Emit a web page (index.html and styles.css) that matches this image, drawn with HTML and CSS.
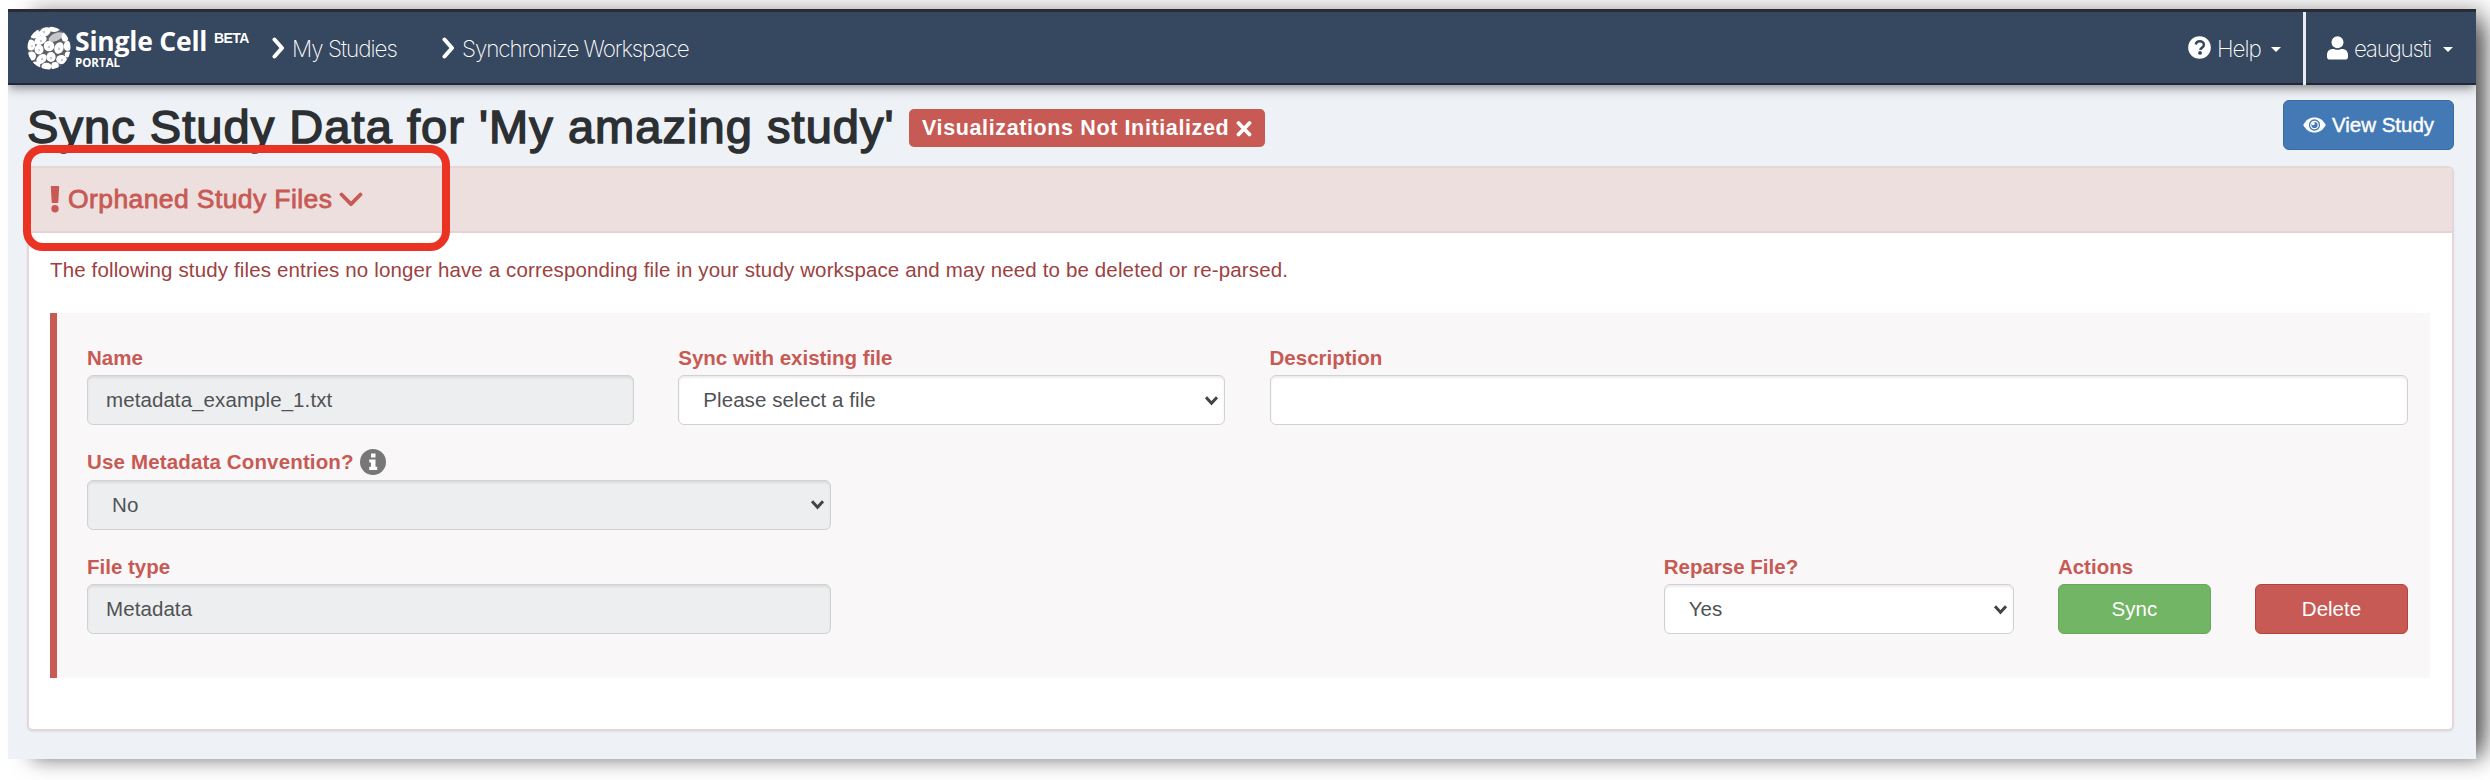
FILE: index.html
```html
<!DOCTYPE html>
<html lang="en">
<head>
<meta charset="utf-8">
<title>Sync Study - Single Cell Portal</title>
<link rel="stylesheet" href="styles.css">
</head>
<body>
<div class="window">
  <nav class="navbar">
    <a class="brand">
      <svg class="brand-mark" width="44" height="44" viewBox="0 0 44 44">
        <defs><clipPath id="disc"><circle cx="22" cy="22" r="21.5"/></clipPath></defs>
        <g clip-path="url(#disc)">
          <rect width="44" height="44" fill="#5c6068"/>
          <g fill="#fff">
            <ellipse cx="8" cy="8" rx="5.500" ry="4.500"/><ellipse cx="18" cy="6" rx="6" ry="4.300" transform="rotate(-30 18 6)"/>
            <ellipse cx="27" cy="3" rx="5.500" ry="3"/><ellipse cx="29" cy="11" rx="8" ry="3.800" transform="rotate(-25 29 11)" fill="#c4c6c9"/>
            <ellipse cx="38" cy="11" rx="3.500" ry="4.800"/><ellipse cx="13.500" cy="14" rx="6.500" ry="4.200" transform="rotate(-25 14 14)"/>
            <ellipse cx="4" cy="19" rx="4.300" ry="5.500"/><ellipse cx="22" cy="20" rx="5.300" ry="5.300"/>
            <ellipse cx="32" cy="22" rx="4.600" ry="6" transform="rotate(20 32 22)"/><ellipse cx="40.500" cy="20" rx="3.800" ry="5"/>
            <ellipse cx="12" cy="23.500" rx="4.500" ry="5"/><ellipse cx="4.500" cy="30" rx="4.500" ry="4.600"/>
            <ellipse cx="14.500" cy="33" rx="5.800" ry="4.200" transform="rotate(-40 14.500 33)"/><ellipse cx="24" cy="31" rx="4.600" ry="5"/>
            <ellipse cx="34.500" cy="33.500" rx="5.300" ry="4.600"/><ellipse cx="19.500" cy="40.500" rx="5" ry="3.800"/>
            <ellipse cx="28" cy="40" rx="3.800" ry="4"/><ellipse cx="9" cy="39" rx="4.300" ry="3.400"/><ellipse cx="41" cy="28.500" rx="3.200" ry="3"/>
          </g>
          <g fill="#c5cad1">
            <circle cx="17" cy="6" r="1.200"/><circle cx="14" cy="15" r="1.200"/><circle cx="22" cy="21" r="1.200"/><circle cx="32" cy="23" r="1.200"/>
            <circle cx="15" cy="33" r="1.200"/><circle cx="24" cy="32" r="1.200"/><circle cx="35" cy="34" r="1.200"/><circle cx="12" cy="24" r="1"/><circle cx="5" cy="20" r="1"/>
          </g>
        </g>
      </svg>
      <span class="brand-text"><span class="brand-name">Single Cell</span><span class="brand-sub">PORTAL</span></span>
      <span class="brand-beta">BETA</span>
    </a>
    <a class="crumb crumb-studies">
      <svg width="13" height="22" viewBox="0 0 13 22"><path d="M2.500 2.500 10 11l-7.500 8.500" fill="none" stroke="#fff" stroke-width="4" stroke-linecap="round" stroke-linejoin="round"/></svg>
      <span class="crumb-label label-studies">My Studies</span>
    </a>
    <a class="crumb">
      <svg width="13" height="22" viewBox="0 0 13 22"><path d="M2.500 2.500 10 11l-7.500 8.500" fill="none" stroke="#fff" stroke-width="4" stroke-linecap="round" stroke-linejoin="round"/></svg>
      <span class="crumb-label label-sync">Synchronize Workspace</span>
    </a>
    <div class="nav-right">
      <a class="nav-help">
        <svg width="23" height="23" viewBox="0 0 512 512"><circle cx="256" cy="256" r="252" fill="#fff"/><path d="M172 190c10-50 45-74 90-74 50 0 92 34 92 80 0 66-78 66-78 114" fill="none" stroke="#364760" stroke-width="56"/><circle cx="268" cy="378" r="42" fill="#364760"/></svg>
        <span class="nav-label label-help">Help</span><i class="caret"></i>
      </a>
      <a class="nav-user">
        <svg width="21" height="24" viewBox="0 0 21 24"><circle cx="10.500" cy="6.200" r="6" fill="#fff"/><path d="M0 21v-2c0-4 2.600-6 6-6 1.500 0 2.500.8 4.500.8s3-.8 4.500-.8c3.400 0 6 2 6 6v2c0 1.500-1 2.600-2.500 2.600h-16C1 23.600 0 22.500 0 21z" fill="#fff"/></svg>
        <span class="nav-label label-user">eaugusti</span><i class="caret"></i>
      </a>
    </div>
  </nav>

  <main class="content">
    <header class="page-head">
      <h1>Sync Study Data for 'My amazing study'</h1>
      <span class="badge"><span class="badge-text">Visualizations Not Initialized</span>
        <svg width="16" height="17" viewBox="0 0 16 17"><path d="M2.500 3l11 11.500m0-11.500l-11 11.500" stroke="#fff" stroke-width="3.800" stroke-linecap="round"/></svg>
      </span>
      <a class="btn btn-view">
        <svg width="23" height="16" viewBox="0 0 24 17"><path d="M0 8.500C3 3 7 .5 12 .5s9 2.500 12 8c-3 5.500-7 8-12 8s-9-2.500-12-8z" fill="#fff"/><circle cx="12" cy="8.500" r="5.300" fill="none" stroke="#437ab5" stroke-width="1.400"/><circle cx="12" cy="8.500" r="3.300" fill="#437ab5"/><circle cx="10.600" cy="7" r="1.700" fill="#fff"/></svg>
        <span class="view-text">View Study</span>
      </a>
    </header>

    <section class="panel">
      <div class="panel-heading">
        <svg class="bang" width="10" height="27" viewBox="0 0 10 27"><path d="M1.800 0h6.400c.6 0 1 .4 1 1L8.300 16c0 .6-.4 1-1 1H2.700c-.6 0-1-.4-1-1L.8 1c0-.6.4-1 1-1z" fill="#c75a54"/><circle cx="5" cy="22.800" r="3.700" fill="#c75a54"/></svg>
        <h2>Orphaned Study Files</h2>
        <svg width="24" height="16" viewBox="0 0 24 16"><path d="M2.500 2.500l9.500 9.700L21.500 2.500" fill="none" stroke="#c75a54" stroke-width="3.800" stroke-linecap="round" stroke-linejoin="round"/></svg>
        <div class="callout"></div>
      </div>
      <div class="panel-body">
        <p class="notice">The following study files entries no longer have a corresponding file in your study workspace and may need to be deleted or re-parsed.</p>
        <form class="well">
          <div class="field span-3"><label>Name</label><div class="control readonly">metadata_example_1.txt</div></div>
          <div class="field span-3"><label>Sync with existing file</label><div class="control select">Please select a file
            <svg class="arrow" width="15" height="11" viewBox="0 0 15 11"><path d="M2 2.200l5.500 6 5.500-6" fill="none" stroke="#444" stroke-width="3"/></svg></div></div>
          <div class="field span-6"><label>Description</label><div class="control"></div></div>
          <div class="field span-4"><label class="label-wide">Use Metadata Convention?<svg class="info" width="26" height="26" viewBox="0 0 26 26"><circle cx="13" cy="13" r="13" fill="#777"/><path d="M11 4.500h4.500v4H11zM9.300 10.500h6.200v7.300h1.700V21H9.300v-3.200H11v-4.200H9.300z" fill="#fff"/></svg></label><div class="control select readonly">No
            <svg class="arrow" width="15" height="11" viewBox="0 0 15 11"><path d="M2 2.200l5.500 6 5.500-6" fill="none" stroke="#444" stroke-width="3"/></svg></div></div>
          <div class="field span-4 new-row"><label>File type</label><div class="control readonly">Metadata</div></div>
          <div class="field span-2 at-9"><label>Reparse File?</label><div class="control select">Yes
            <svg class="arrow" width="15" height="11" viewBox="0 0 15 11"><path d="M2 2.200l5.500 6 5.500-6" fill="none" stroke="#444" stroke-width="3"/></svg></div></div>
          <div class="field"><label>Actions</label><a class="btn btn-sync">Sync</a></div>
          <div class="field field-end"><a class="btn btn-delete">Delete</a></div>
        </form>
      </div>
    </section>
  </main>
</div>
</body>
</html>
```
FILE: styles.css
```css
* { box-sizing: border-box; }

body {
  margin: 0;
  width: 2490px;
  height: 780px;
  padding: 9px 14px 21px 8px;
  overflow: hidden;
  background: #fff;
  font-family: "Liberation Sans", Arial, sans-serif;
  font-size: 20.5px;
  color: #4f5255;
}

svg { display: block; flex: none; }

.window {
  height: 750px;
  background: #eef2f6;
  box-shadow:
    16px 8px 20px -8px rgba(0, 0, 0, .55),
    16px -10px 20px -8px rgba(0, 0, 0, .3);
}

/* Navigation bar */
.navbar {
  height: 76px;
  display: flex;
  align-items: center;
  padding-left: 19px;
  background: #364760;
  border-top: 3px solid #2b2b36;
  border-bottom: 2px solid #26263a;
  box-shadow: 0 4px 10px -1px rgba(0, 0, 0, .45);
  clip-path: inset(0 0 -20px 0);
  color: #fff;
}

.brand { display: flex; width: 245px; height: 44px; }
.brand-text { width: 136px; margin-left: 4px; display: flex; flex-direction: column; }
.brand-name {
  font: 700 26.5px/29px "Open Sans", sans-serif;
  letter-spacing: -.2px;
  margin-top: 1px;
  white-space: nowrap;
}
.brand-sub { font: 700 11.5px/12px "Open Sans", sans-serif; margin-top: 1px; }
.brand-beta { font-size: 14px; font-weight: 700; line-height: 16px; margin: 4px 0 0 3px; letter-spacing: -.6px; }

.crumb { display: flex; align-items: center; }
.crumb-studies { width: 170px; }
.crumb-label,
.nav-label {
  font: 200 22.5px/30px Inter, "Liberation Sans", sans-serif;
  white-space: nowrap;
  padding-top: 2px;
}
.crumb-label { margin-left: 7px; }
.label-studies { letter-spacing: -1px; }
.label-sync { letter-spacing: -1.1px; }

.nav-right { margin-left: auto; height: 73px; align-self: flex-start; display: flex; }
.nav-help,
.nav-user { display: flex; align-items: center; height: 71px; }
.nav-help { width: 115px; }
.nav-help .nav-label { width: 54px; }
.nav-user { width: 173px; height: 73px; padding: 0 0 2px 21px; border-left: 3px solid #e8ecf2; }
.nav-user .nav-label { width: 89px; }
.nav-label { margin-left: 6px; letter-spacing: -1px; }
.nav-user .nav-label { letter-spacing: -1.300px; }
.caret { border: 5.500px solid transparent; border-top-color: #fff; border-bottom: 0; margin-top: 4px; }

/* Page heading */
.content { padding: 15px 22px 0 19px; }
.page-head { display: flex; height: 66px; }
h1 {
  margin: 0;
  width: 882px;
  font-size: 47px;
  font-weight: 400;
  line-height: 53px;
  letter-spacing: 1.050px;
  color: #2c3033;
  white-space: nowrap;
  -webkit-text-stroke: 1.500px #2c3033;
}
.badge {
  display: flex;
  align-items: center;
  width: 356px;
  height: 38px;
  margin-top: 9px;
  padding-left: 13px;
  border-radius: 5px;
  background: #c75a54;
  color: #fff;
  font-size: 21.5px;
  font-weight: 700;
}
.badge-text { width: 314px; white-space: nowrap; letter-spacing: .620px; }

.btn {
  display: flex;
  align-items: center;
  justify-content: center;
  height: 50px;
  border: 1.500px solid;
  border-radius: 6px;
  color: #fff;
}
.btn-view { width: 171px; margin-left: auto; background: #437ab5; border-color: #3a6a9f; }
.view-text { margin-left: 6px; white-space: nowrap; -webkit-text-stroke: .4px #fff; }
.btn-sync { background: #72b565; border-color: #68a75c; }
.btn-delete { background: #c75a54; border-color: #bb423c; }

/* Panel */
.panel {
  height: 565px;
  background: #fff;
  border: 2px solid #e6d6d9;
  border-radius: 6px;
  box-shadow: 0 1px 2px rgba(0, 0, 0, .08);
}
.panel-heading {
  position: relative;
  display: flex;
  align-items: center;
  height: 65px;
  padding-left: 21px;
  background: #eedfdf;
  border-bottom: 2px solid #e9d0d4;
}
h2 {
  margin: 0 0 0 8px;
  width: 271px;
  font-size: 26.5px;
  font-weight: 400;
  letter-spacing: .4px;
  color: #c75a54;
  white-space: nowrap;
  -webkit-text-stroke: .8px #c75a54;
}
.callout {
  position: absolute;
  left: -6px;
  top: -23px;
  width: 427px;
  height: 106px;
  border: 8px solid #ea3323;
  border-radius: 20px;
}

.panel-body { padding: 23px 22px 0 21px; }
.notice { margin: 0; color: #9c4241; line-height: 28px; letter-spacing: .140px; white-space: nowrap; }

/* Form */
.well {
  display: grid;
  grid-template-columns: repeat(12, minmax(0, 1fr));
  grid-auto-rows: 90px;
  column-gap: 44.1px;
  row-gap: 14.500px;
  height: 365px;
  margin-top: 29px;
  padding: 31px 22px 0 30px;
  border-left: 7px solid #c75a54;
  background: #f9f7f7;
}
.field { display: flex; flex-direction: column; height: 81px; }
.field-end { justify-content: flex-end; }
.span-2 { grid-column: span 2; }
.span-3 { grid-column: span 3; }
.span-4 { grid-column: span 4; }
.span-6 { grid-column: span 6; }
.new-row { grid-column: 1 / span 4; }
.at-9 { grid-column: 9 / span 2; }

label {
  display: flex;
  align-items: center;
  height: 31px;
  padding-bottom: 4px;
  color: #c75a54;
  font-weight: 700;
  white-space: nowrap;
}
.label-wide { letter-spacing: .150px; }
.info { margin-left: 6px; }
.control {
  display: flex;
  align-items: center;
  justify-content: space-between;
  height: 50px;
  padding: 0 18px;
  background: #fff;
  border: 1.500px solid #cfd1d2;
  border-radius: 6px;
  box-shadow: inset 0 2px 2px rgba(0, 0, 0, .08);
  letter-spacing: .080px;
}
.readonly { background: #edeeef; }
.select { padding: 0 5px 0 24px; }
```
